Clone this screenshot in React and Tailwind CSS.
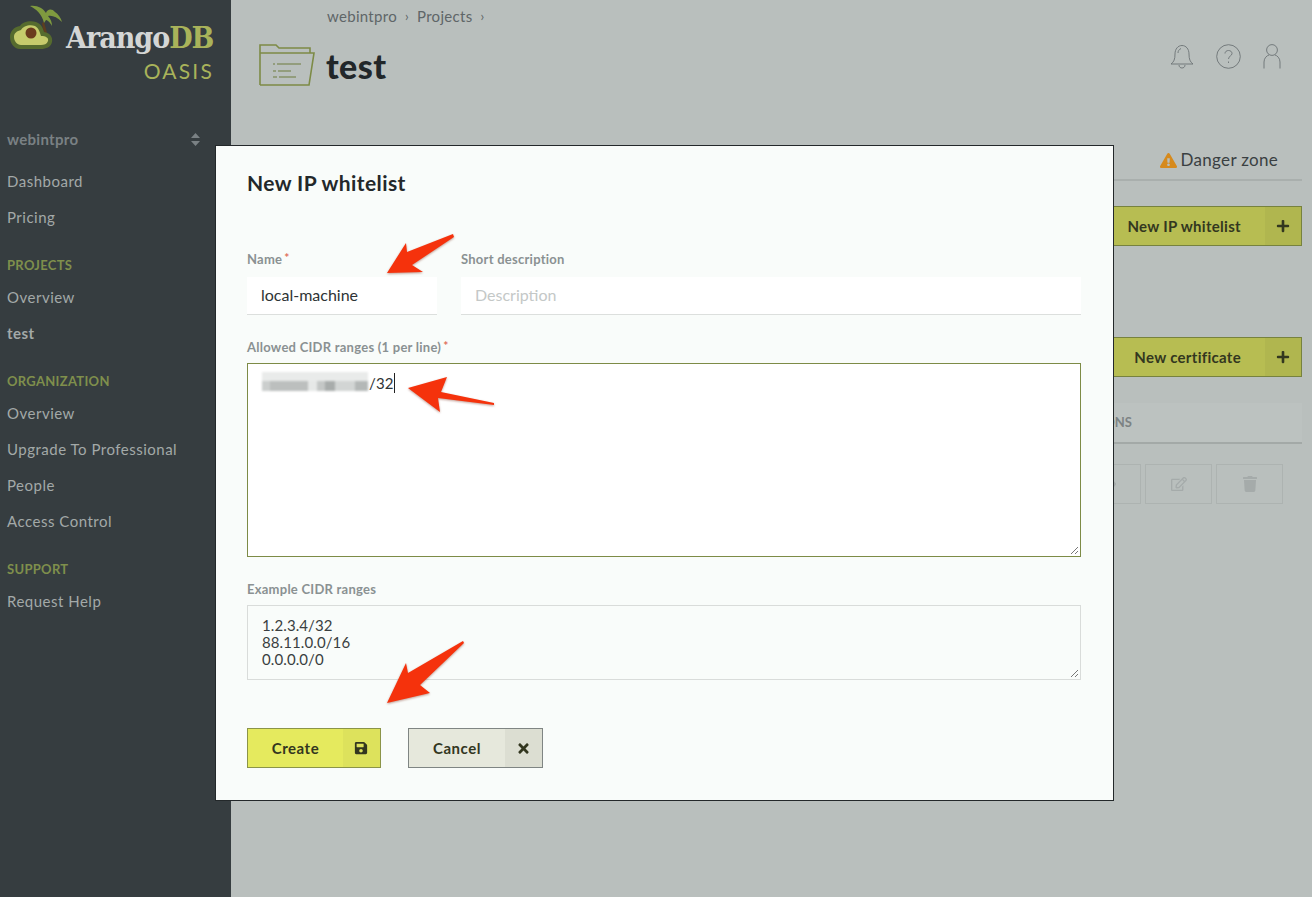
import React from 'react';
import { FaPlus, FaSave, FaTimes, FaRegEdit, FaTrash, FaEye, FaExclamationTriangle } from 'react-icons/fa';

const font = { fontFamily: 'Lato, "Open Sans", sans-serif' };

const Arrow = ({ className, box, points }) => (
  <svg className={`absolute drop-shadow-[0_1px_1px_rgba(120,40,20,0.45)] ${className}`} viewBox={box} fill="#f5320c">
    <polygon points={points} />
  </svg>
);

const NavItem = ({ children, strong }) => (
  <div className={`h-9 flex items-center text-[15px] tracking-[0.5px] text-[#a3a9a8] ${strong ? 'font-bold' : ''}`}>
    {children}
  </div>
);

const NavHead = ({ children }) => (
  <div className="mt-[16px] h-[28px] pt-[2px] flex items-center text-[13px] font-bold tracking-[0.3px] text-[#7f8f4c]">{children}</div>
);

const Logo = () => (
  <div className="relative h-[112px]">
    <svg className="absolute left-0 top-0" width="66" height="52" viewBox="0 0 66 52">
      <path d="M44 22 L47 33 L44 34 L42 23Z" fill="#5e3d1f" />
      <path d="M44 23 C42 14 36 9 30 6 C37 5 43 8 46 13 C47 9 52 8 55 12 C58 14 61 18 62 22 C57 17 52 15 48 16 C51 19 52 23 52 26 C50 22 47 20 46 20Z" fill="#7f9a3f" />
      <path d="M10 37 C10 31 14 27 20 26 C22 22 30 20 36 22 C42 24 43 29 44 32 C50 33 53 37 52 42 C51 47 46 49 41 49 L20 49 C14 49 10 43 10 37Z" fill="#566b2e" />
      <path d="M14 37 C14 33 17 31 21 30 C23 26 30 24 35 26 C39 28 40 33 41 36 C46 36 49 38 48 41 C47 44 44 45 41 45 L21 45 C17 45 14 41 14 37Z" fill="#c6cb6c" />
      <circle cx="31" cy="33" r="5.5" fill="#6b3b1e" />
    </svg>
    <div className="absolute left-[66px] top-[19px] text-[30px] leading-[38px] font-bold tracking-[-1px] text-[#d4d6d5]" style={{ fontFamily: '"DejaVu Serif Condensed", "DejaVu Serif", serif' }}>
      Arango<span className="text-[#a9b35a]">DB</span>
    </div>
    <div className="absolute right-[17px] top-[58px] text-[21px] leading-[26px] tracking-[2.2px] text-[#a9b35a]">OASIS</div>
  </div>
);

const Sidebar = () => (
  <aside className="w-[231px] shrink-0 bg-[#363d40] h-full">
    <Logo />
    <div className="px-[7px] pt-[9px]">
      <div className="h-9 mb-[6px] flex items-center justify-between pr-[24px] text-[15px] font-bold tracking-[0.3px] text-[#7a8184]">
        <span>webintpro</span>
        <svg width="9" height="13" viewBox="0 0 9 13" fill="#7a8184">
          <path d="M4.5 0 L9 5 H0Z M0 8 H9 L4.5 13Z" />
        </svg>
      </div>
      <NavItem>Dashboard</NavItem>
      <NavItem>Pricing</NavItem>
      <NavHead>PROJECTS</NavHead>
      <NavItem>Overview</NavItem>
      <NavItem strong>test</NavItem>
      <NavHead>ORGANIZATION</NavHead>
      <NavItem>Overview</NavItem>
      <NavItem>Upgrade To Professional</NavItem>
      <NavItem>People</NavItem>
      <NavItem>Access Control</NavItem>
      <NavHead>SUPPORT</NavHead>
      <NavItem>Request Help</NavItem>
    </div>
  </aside>
);

const BgButton = ({ children, className }) => (
  <div className={`flex justify-end ${className}`}>
    <div className="w-[300px] h-[40px] flex border border-[#77823e] bg-[#b7bd52] text-[#33371f]">
      <div className="flex-1 flex items-center justify-end pr-[24px] text-[15px] font-bold tracking-[0.3px]">{children}</div>
      <div className="w-[36px] bg-[#b0b64f] flex items-center justify-center">
        <FaPlus size={14} />
      </div>
    </div>
  </div>
);

const TopIcons = () => (
  <div className="flex items-center gap-[22px] pr-[21px] -mt-[18px]">
    <svg width="24" height="25" viewBox="0 0 24 25" fill="none" stroke="#6c7375" strokeWidth="0.9">
      <path d="M1 20 C4 18 5 15 5 10 C5 5 8 1.5 12 1.5 C16 1.5 19 5 19 10 C19 15 20 18 23 20 Z" />
      <path d="M9 21 C9 25 15 25 15 21" />
      <path d="M8 9 C8 7 9 5.5 11 4.5" />
    </svg>
    <svg width="25" height="25" viewBox="0 0 25 25" fill="none" stroke="#6c7375" strokeWidth="0.9">
      <circle cx="12.5" cy="12.5" r="11.8" />
      <path d="M9 9.5 C9 5.5 16 5.5 16 9.5 C16 12 12.5 12 12.5 15" />
      <path d="M12.5 17.5 V19" />
    </svg>
    <svg width="18" height="25" viewBox="0 0 18 25" fill="none" stroke="#6c7375" strokeWidth="0.9">
      <circle cx="9" cy="6" r="5.4" />
      <path d="M1 24.5 V18 C1 14 4 11.5 6 11 M17 24.5 V18 C17 14 14 11.5 12 11" />
    </svg>
  </div>
);

const Background = () => (
  <main className="flex-1 h-full bg-[#b9bfbd] pl-[28px] pr-[10px]">
    <div className="h-[33px] flex items-center gap-[8px] text-[15px] tracking-[0.3px] pl-[68px] text-[#5f6668]">
      <span>webintpro</span><span className="text-[13px]">›</span><span>Projects</span><span className="text-[13px]">›</span>
    </div>
    <div className="h-[64px] flex items-center justify-between">
      <div className="flex items-center gap-[11px]">
        <svg width="56" height="42" viewBox="0 0 56 42" fill="none" stroke="#7d8b46" strokeWidth="1.6">
          <path d="M1 41 V1 H17 L20 4 H51 V9" />
          <path d="M1 41 H50 L55 9 H1" />
          <path d="M14 20 H16 M18 20 H42 M14 27 H17 M19 27 H32 M14 33 H18 M20 33 H37" strokeWidth="1.2" stroke="#6f7c3e" />
        </svg>
        <h1 className="text-[34px] font-black text-[#22272a] tracking-[0.4px]">test</h1>
      </div>
      <TopIcons />
    </div>
    <div className="h-[84px] border-b-2 border-[#a9afad] flex items-end justify-end pr-[24px] pb-[7px] text-[17px] tracking-[0.3px] text-[#3a4042] gap-[4px]">
      <FaExclamationTriangle size={17} color="#d68a1d" className="mb-[3px]" />
      <span>Danger zone</span>
    </div>
    <BgButton className="mt-[25px]">New IP whitelist</BgButton>
    <BgButton className="mt-[91px]">New certificate</BgButton>
    <div className="mt-[26px] h-[41px] bg-[#bcc2c0] border-b-2 border-[#a3a9a7] flex items-center justify-end pr-[170px] text-[13px] font-bold text-[#7c8384]">
      ACTIONS
    </div>
    <div className="mt-[20px] flex justify-end gap-[4px] pr-[19px]">
      {[FaEye, FaRegEdit, FaTrash].map((Icon, i) => (
        <div key={i} className="w-[67px] h-[40px] border border-[#adb3b1] flex items-center justify-center text-[#a5abaa]">
          <Icon size={16} />
        </div>
      ))}
    </div>
  </main>
);

const Label = ({ children, required }) => (
  <div className="h-[18px] pt-[2px] flex items-center text-[13px] font-bold tracking-[0.25px] text-[#8a9192]">
    {children}
    {required && <span className="text-[#e0705a] ml-[2px] -mt-[5px] text-[12px]">*</span>}
  </div>
);

const Grip = () => (
  <svg className="absolute right-[1px] bottom-[1px]" width="9" height="9" viewBox="0 0 9 9" stroke="#777" strokeWidth="1">
    <path d="M8 1 L1 8 M8 5 L5 8" />
  </svg>
);

// the address is pixelated out in the original
const BLUR_BLOCKS = [
  'w-[8px] bg-[#cbcecd]',
  'w-[38px] bg-[#bcbfbe]',
  'w-[9px] bg-[#e6e8e7]',
  'w-[8px] bg-[#c4c7c6]',
  'w-[10px] bg-[#a8acab]',
  'w-[20px] bg-[#d2d5d4]',
  'w-[13px] bg-[#b4b8b7]',
];

const Redacted = () => (
  <span className="w-[106px] mr-[1px] flex flex-col blur-[1px]">
    <span className="h-[9px] -mt-[1px] bg-[#e9ebea]" />
    <span className="h-[10px] flex">
      {BLUR_BLOCKS.map((c) => <span key={c} className={c} />)}
    </span>
  </span>
);

const Modal = () => (
  <div className="absolute left-[215px] top-[145px] w-[899px] h-[656px] border border-[#23282a] bg-[#f9fcfa] pl-[31px] pr-[32px] pt-[25px]">
    <h2 className="text-[21px] leading-[24px] font-bold tracking-[0.4px] text-[#23282a]">New IP whitelist</h2>
    <div className="mt-[55px] flex gap-[24px]">
      <div className="w-[190px]">
        <Label required>Name</Label>
        <div className="mt-[9px] h-[38px] pb-[2px] bg-white border-b border-[#dcdfdd] flex items-center px-[14px] text-[16px] text-[#2e3335]">local-machine</div>
      </div>
      <div className="flex-1">
        <Label>Short description</Label>
        <div className="mt-[9px] h-[38px] pb-[2px] bg-white border-b border-[#dcdfdd] flex items-center px-[14px] text-[16px] text-[#c4c8c7]">Description</div>
      </div>
    </div>
    <div className="mt-[23px]">
      <Label required>Allowed CIDR ranges (1 per line)</Label>
      <div className="relative mt-[7px] h-[194px] border border-[#7d8b46] bg-white px-[14px] pt-[9px] text-[15px] leading-[20px] tracking-[0.1px] text-[#2e3335] flex items-start">
        <Redacted />
        <span>/32</span>
        <span className="w-px h-[20px] ml-px bg-[#222]" />
        <Grip />
      </div>
    </div>
    <div className="mt-[23px]">
      <Label>Example CIDR ranges</Label>
      <div className="relative mt-[7px] h-[75px] border border-[#d9dcda] px-[14px] pt-[11px] text-[15px] leading-[17px] tracking-[0.1px] text-[#3a3f41]">
        <div>1.2.3.4/32</div>
        <div>88.11.0.0/16</div>
        <div>0.0.0.0/0</div>
        <Grip />
      </div>
    </div>
    <div className="mt-[48px] flex gap-[27px]">
      <div className="w-[134px] h-[40px] flex border border-[#8b9448] bg-[#e5ea5e] text-[#33371f]">
        <div className="flex-1 flex items-center justify-center text-[15px] font-bold tracking-[0.5px]">Create</div>
        <div className="w-[37px] pr-[2px] bg-[#dde25c] flex items-center justify-center"><FaSave size={14} /></div>
      </div>
      <div className="w-[135px] h-[40px] flex border border-[#7f8583] bg-[#e6e8dc] text-[#33371f]">
        <div className="flex-1 flex items-center justify-center text-[15px] font-bold tracking-[0.5px]">Cancel</div>
        <div className="w-[37px] bg-[#dcded2] flex items-center justify-center"><FaTimes size={15} /></div>
      </div>
    </div>
  </div>
);

export default function App() {
  return (
    <div className="relative w-[1312px] h-[897px] overflow-hidden flex" style={font}>
      <Sidebar />
      <Background />
      <Modal />
      <Arrow
        className="left-[385px] top-[232px] w-[72px] h-[44px]"
        box="385 232 72 44"
        points="387,273 406,243 407,252 453,234 454,237 412,265 423,272"
      />
      <Arrow
        className="left-[406px] top-[375px] w-[90px] h-[39px]"
        box="406 375 90 39"
        points="408,388 447,377 441,392 494,403 494,405 438,398 440,412"
      />
      <Arrow
        className="left-[385px] top-[639px] w-[81px] h-[66px]"
        box="385 639 81 66"
        points="387,703 406,663 408,673 463,641 464,643 420,685 430,693"
      />
    </div>
  );
}
